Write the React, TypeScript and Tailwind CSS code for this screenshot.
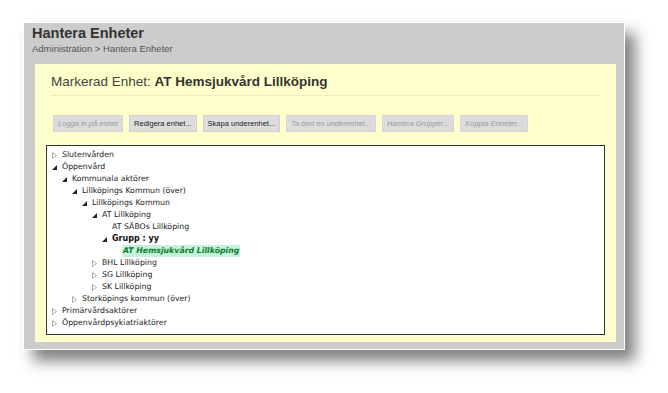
import React from 'react';

type Node = {
  label: string;
  depth: number;
  state: 'open' | 'closed' | 'leaf';
  kind?: 'group' | 'selected';
};

const nodes: Node[] = [
  { label: 'Slutenvården', depth: 0, state: 'closed' },
  { label: 'Öppenvård', depth: 0, state: 'open' },
  { label: 'Kommunala aktörer', depth: 1, state: 'open' },
  { label: 'Lillköpings Kommun (över)', depth: 2, state: 'open' },
  { label: 'Lillköpings Kommun', depth: 3, state: 'open' },
  { label: 'AT Lillköping', depth: 4, state: 'open' },
  { label: 'AT SÄBOs Lillköping', depth: 5, state: 'leaf' },
  { label: 'Grupp : yy', depth: 5, state: 'open', kind: 'group' },
  { label: 'AT Hemsjukvård Lillköping', depth: 6, state: 'leaf', kind: 'selected' },
  { label: 'BHL Lillköping', depth: 4, state: 'closed' },
  { label: 'SG Lillköping', depth: 4, state: 'closed' },
  { label: 'SK Lillköping', depth: 4, state: 'closed' },
  { label: 'Storköpings kommun (över)', depth: 2, state: 'closed' },
  { label: 'Primärvårdsaktörer', depth: 0, state: 'closed' },
  { label: 'Öppenvårdpsykiatriaktörer', depth: 0, state: 'closed' },
];

const buttons = [
  { label: 'Logga in på enhet', enabled: false },
  { label: 'Redigera enhet...', enabled: true },
  { label: 'Skapa underenhet...', enabled: true },
  { label: 'Ta bort en underenhet...', enabled: false },
  { label: 'Hantera Grupper...', enabled: false },
  { label: 'Koppla Enheter...', enabled: false },
];

const Toggle = ({ state }: { state: Node['state'] }) => {
  if (state === 'leaf') return <span className="w-[10px] shrink-0" />;
  return (
    <span className="w-[10px] shrink-0 flex items-center">
      {state === 'closed' ? (
        <svg width="5" height="7" viewBox="0 0 5 7">
          <path d="M0.5 0.5 L4.5 3.5 L0.5 6.5 Z" fill="none" stroke="#aaaaaa" strokeWidth="1" />
        </svg>
      ) : (
        <svg width="5" height="5" viewBox="0 0 5 5">
          <path d="M5 0 L5 5 L0 5 Z" fill="#222222" />
        </svg>
      )}
    </span>
  );
};

export default function App() {
  return (
    <div className="w-[668px] h-[393px] bg-white pt-[22px] pl-[23px] font-['Liberation_Sans',Arial,sans-serif]">
      <div className="w-[602px] h-[328px] bg-[#cccccc] border border-white shadow-[10px_11px_14px_rgba(0,0,0,0.5)] flex flex-col">
        <div className="pl-[8px] pt-[1px] h-[41px]">
          <div className="text-[14.5px] leading-[18px] font-bold text-[#333333]">Hantera Enheter</div>
          <div className="text-[9.5px] leading-[13px] text-[#555555]">Administration &gt; Hantera Enheter</div>
        </div>
        <div className="ml-[11px] w-[581px] h-[278px] bg-[#ffffcc] flex flex-col">
          <div className="mx-[16px] mt-[9px] pb-[4px] border-b border-[#eeeeb8] text-[13.5px] leading-[18px] text-[#444444]">
            Markerad Enhet: <span className="font-bold text-[#333333]">AT Hemsjukvård Lillköping</span>
          </div>
          <div className="flex gap-[6px] ml-[18px] mt-[19px]">
            {buttons.map((b) => (
              <div
                key={b.label}
                className={
                  b.enabled
                    ? 'h-[17px] px-[4px] flex items-center bg-[#dddddd] border border-[#d0d0d0] text-[7.5px] text-[#222222]'
                    : 'h-[17px] px-[4px] flex items-center bg-[#dcdcdc] border border-[#d4d4d4] text-[7.5px] italic text-[#999999]'
                }
              >
                {b.label}
              </div>
            ))}
          </div>
          <div className="mx-[11px] mt-[13px] h-[190px] bg-white border border-[#333333] pt-[3px] pl-[5px] font-['DejaVu_Sans',Verdana,sans-serif] text-[7.8px] text-[#222222]">
            {nodes.map((n) => (
              <div key={n.label} className="h-[12px] flex items-center" style={{ paddingLeft: n.depth * 10 }}>
                <Toggle state={n.state} />
                {n.kind === 'selected' ? (
                  <span className="bg-[#c4f2dc] px-[1px] font-bold italic text-[#0f7a2a] leading-[12px]">{n.label}</span>
                ) : n.kind === 'group' ? (
                  <span className="font-bold text-[8px] text-[#111111]">{n.label}</span>
                ) : (
                  <span>{n.label}</span>
                )}
              </div>
            ))}
          </div>
        </div>
      </div>
    </div>
  );
}
